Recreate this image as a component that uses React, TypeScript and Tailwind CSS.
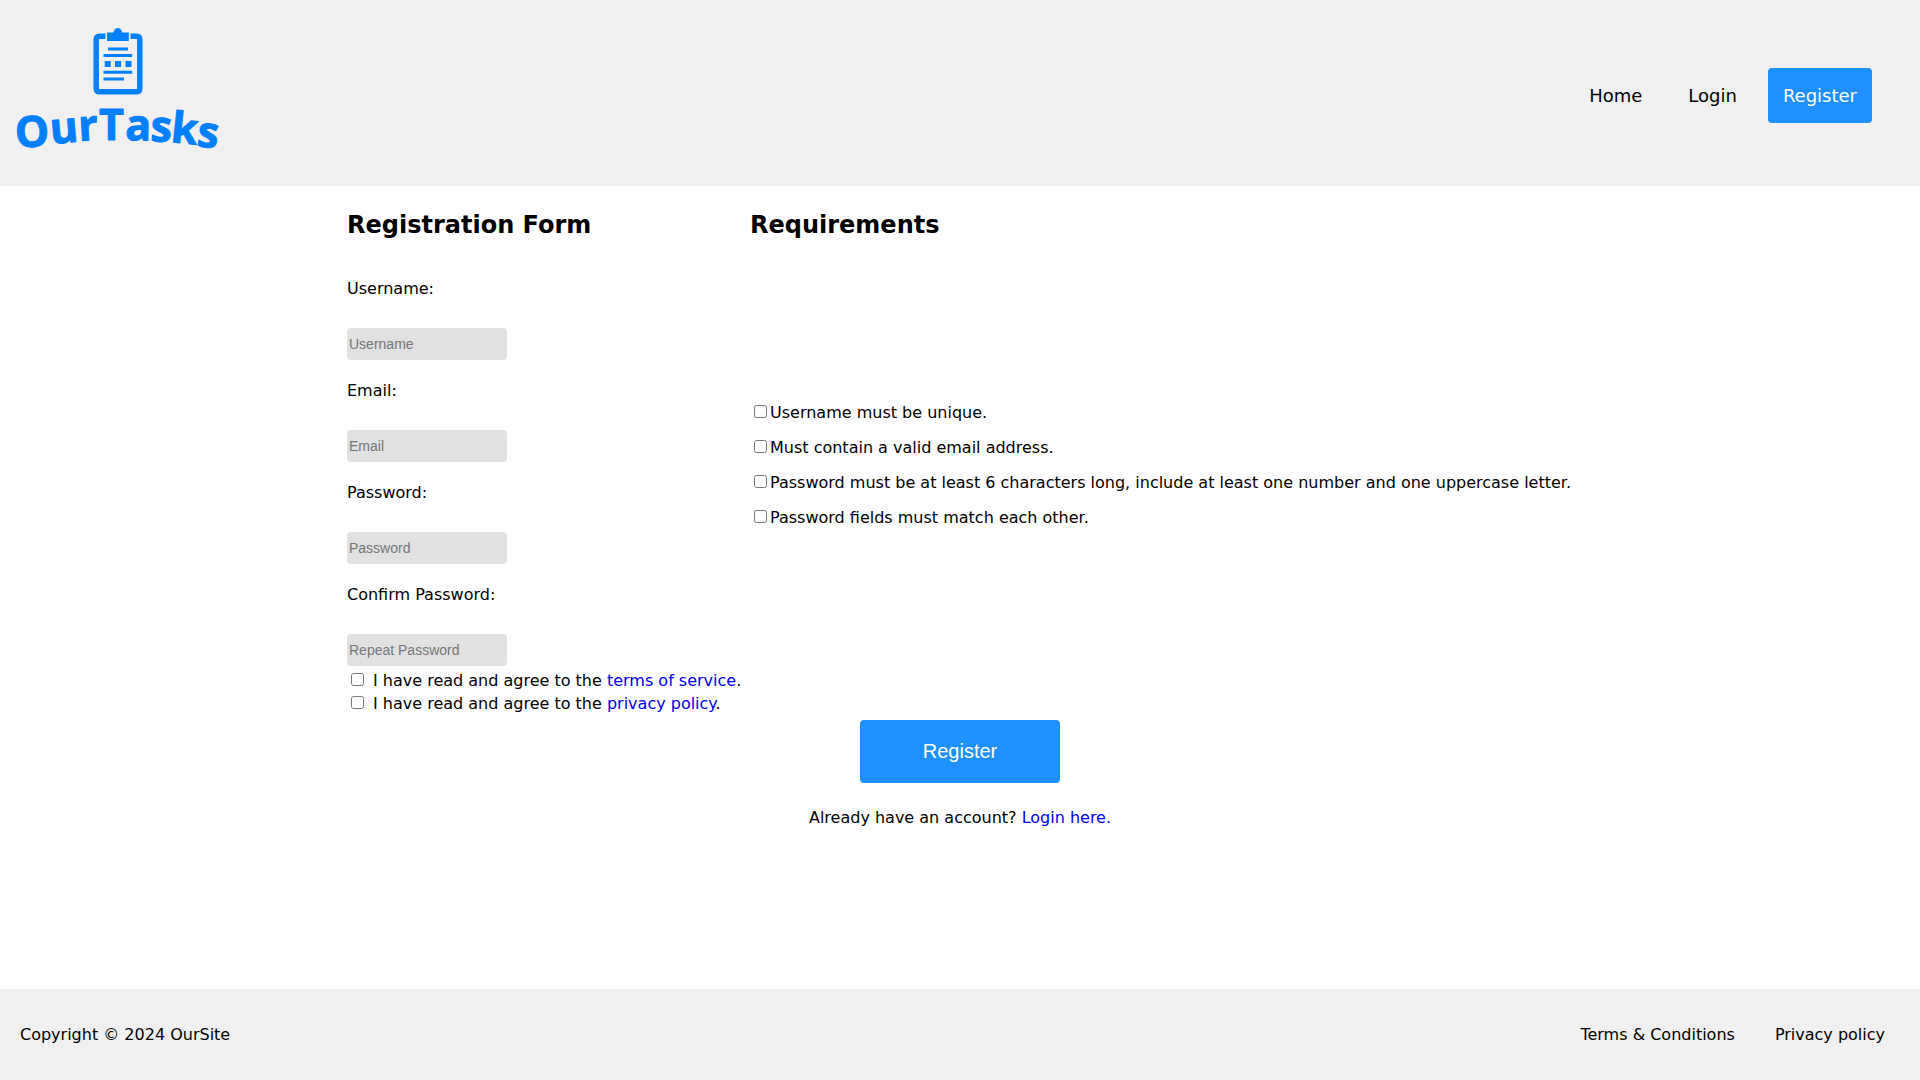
import React from "react";

const fields = [
  { id: "username", label: "Username:", placeholder: "Username", type: "text" },
  { id: "email", label: "Email:", placeholder: "Email", type: "email" },
  { id: "password", label: "Password:", placeholder: "Password", type: "password" },
  { id: "confirm", label: "Confirm Password:", placeholder: "Repeat Password", type: "password" },
];

const requirements = [
  "Username must be unique.",
  "Must contain a valid email address.",
  "Password must be at least 6 characters long, include at least one number and one uppercase letter.",
  "Password fields must match each other.",
];

const agreements = [
  { id: "terms", link: "terms of service" },
  { id: "privacy", link: "privacy policy" },
];

const logoLetters = [
  { char: "O", x: 16, y: 148, angle: -4 },
  { char: "u", x: 51, y: 144, angle: -5 },
  { char: "r", x: 79, y: 141, angle: -3 },
  { char: "T", x: 99, y: 140, angle: 0 },
  { char: "a", x: 125, y: 140, angle: 1 },
  { char: "s", x: 150, y: 141, angle: 3 },
  { char: "k", x: 170, y: 142, angle: 6 },
  { char: "s", x: 196, y: 146, angle: 7 },
];

function Logo() {
  return (
    <svg viewBox="0 0 240 186" className="h-[186px] w-60" fill="#0080ff" role="img" aria-label="OurTasks">
      <path
        d="M105.500 36.200H99.500Q96.200 36.200 96.200 39.500V88.500Q96.200 91.800 99.500 91.800H136.500Q139.800 91.800 139.800 88.500V39.500Q139.800 36.200 136.500 36.200H130.500"
        fill="none"
        stroke="#0080ff"
        strokeWidth="5.500"
      />
      <path d="M107 32.500H113.500C114 29.500 115.500 28 117.800 28S121.600 29.500 122.200 32.500H128.800V41H107Z" />
      <path d="M108 47.500h20v3h-20zM103.500 54h28.700v3h-28.700zM103.500 70.700h28.700v3h-28.700zM103.500 77.500h20.500v3h-20.500z" />
      <path d="M104.700 61h6v6h-6zM115 61h6v6h-6zM125.500 61h6v6h-6z" />
      <g fontFamily="Open Sans" fontWeight="700" fontSize="43" stroke="#0080ff" strokeWidth="1" strokeLinejoin="round">
        {logoLetters.map(({ char, x, y, angle }) => (
          <text key={x} x={x} y={y} transform={`rotate(${angle} ${x} ${y})`}>
            {char}
          </text>
        ))}
      </g>
    </svg>
  );
}

export default function App() {
  return (
    <div className="flex min-h-screen flex-col bg-white font-[Verdana,'DejaVu_Sans',sans-serif] text-[16px] leading-[19px] text-black">
      <header className="flex items-center justify-between bg-[#f0f0f0] pr-12">
        <a href="#home">
          <Logo />
        </a>
        <nav className="mt-1 flex gap-4 text-[18px] leading-[21px]">
          <a href="#home" className="px-[15px] py-[17px]">Home</a>
          <a href="#login" className="px-[15px] py-[17px]">Login</a>
          <a href="#register" className="rounded-[4px] bg-[#1e90ff] px-[15px] py-[17px] text-white">Register</a>
        </nav>
      </header>

      <main className="flex-1 pt-[25px]">
        <form className="flex flex-col items-center">
          <div className="flex gap-1">
            <section className="min-w-[399px]">
              <h2 className="mb-10 text-[24px] leading-7 font-bold">Registration Form</h2>
              <div className="flex flex-col gap-[21px]">
                {fields.map((f) => (
                  <div key={f.id} className="flex flex-col items-start gap-[30px]">
                    <label htmlFor={f.id}>{f.label}</label>
                    <input
                      id={f.id}
                      type={f.type}
                      placeholder={f.placeholder}
                      className="h-8 w-40 rounded-[4px] bg-[#e1e1e1] px-0.5 font-[Arial,'Liberation_Sans',sans-serif] text-[14px] placeholder:text-[#757575]"
                    />
                  </div>
                ))}
              </div>
              <div className="mt-[3px] leading-[23px]">
                {agreements.map((a) => (
                  <div key={a.id} className="flex items-center">
                    <input id={a.id} type="checkbox" className="mr-[9px] mb-0.5 ml-1 size-[13px]" />
                    <label htmlFor={a.id}>
                      I have read and agree to the{" "}
                      <a href={`#${a.id}`} className="text-[#0000ee]">{a.link}</a>.
                    </label>
                  </div>
                ))}
              </div>
            </section>
            <section className="pr-0.5">
              <h2 className="mb-41 text-[24px] leading-7 font-bold">Requirements</h2>
              <ul className="flex flex-col gap-4">
                {requirements.map((text, i) => (
                  <li key={text} className="flex items-center">
                    <input id={`req-${i}`} type="checkbox" className="mr-[3px] mb-0.5 ml-1 size-[13px]" />
                    <label htmlFor={`req-${i}`}>{text}</label>
                  </li>
                ))}
              </ul>
            </section>
          </div>
          <button
            type="submit"
            className="mt-[5px] h-[63px] w-50 rounded-[4px] bg-[#1e90ff] font-[Arial,'Liberation_Sans',sans-serif] text-[20px] text-white"
          >
            Register
          </button>
          <p className="mt-[25px]">
            Already have an account? <a href="#login" className="text-[#0000ee]">Login here.</a>
          </p>
        </form>
      </main>

      <footer className="flex items-center justify-between bg-[#f0f0f0] py-9 pr-[35px] pl-5">
        <p>Copyright © 2024 OurSite</p>
        <nav className="flex gap-10">
          <a href="#terms">Terms &amp; Conditions</a>
          <a href="#privacy">Privacy policy</a>
        </nav>
      </footer>
    </div>
  );
}
